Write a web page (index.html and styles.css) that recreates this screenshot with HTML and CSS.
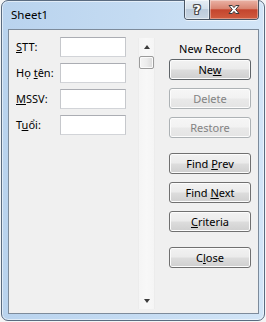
FILE: index.html
```html
<!DOCTYPE html>
<html>
<head>
<meta charset="utf-8">
<link rel="stylesheet" href="styles.css">
</head>
<body>
<div class="window">
  <div class="titlebar">
    <span class="title">Sheet1</span>
    <div class="caption-btns">
      <div class="cap help"><span class="q">?</span></div>
      <div class="cap close">
        <svg width="14" height="11" viewBox="0 0 14 11">
          <path d="M2 1.5 L5.2 1.5 L7 3.6 L8.8 1.5 L12 1.5 L8.7 5.5 L12 9.5 L8.8 9.5 L7 7.4 L5.2 9.5 L2 9.5 L5.3 5.5 Z" fill="#fff" stroke="#3b3b3b" stroke-width="1" stroke-linejoin="round"/>
        </svg>
      </div>
    </div>
  </div>
  <div class="client">
    <div class="form">
      <div class="row"><label class="lbl"><u>S</u>TT:</label><span class="box"></span></div>
      <div class="row"><label class="lbl">Họ <u>t</u>ên:</label><span class="box"></span></div>
      <div class="row"><label class="lbl"><u>M</u>SSV:</label><span class="box"></span></div>
      <div class="row"><label class="lbl">T<u>u</u>ổi:</label><span class="box"></span></div>
    </div>
    <div class="scrollbar">
      <div class="arrow-btn"><span class="tri up"></span></div>
      <div class="thumb"></div>
      <div class="track"></div>
      <div class="arrow-btn"><span class="tri down"></span></div>
    </div>
    <div class="actions">
      <div class="record">New Record</div>
      <div class="group">
        <button class="btn default">Ne<u>w</u></button>
        <button class="btn" disabled>Delete</button>
        <button class="btn" disabled>Restore</button>
      </div>
      <div class="group">
        <button class="btn">Find <u>P</u>rev</button>
        <button class="btn">Find <u>N</u>ext</button>
        <button class="btn"><u>C</u>riteria</button>
      </div>
      <div class="group">
        <button class="btn">C<u>l</u>ose</button>
      </div>
    </div>
  </div>
</div>
</body>
</html>
```

FILE: styles.css
```css
* { box-sizing: border-box; }
html, body {
  margin: 0;
  padding: 0;
  width: 266px;
  height: 322px;
  overflow: hidden;
  background: #f3f4f5;
  font-family: "Noto Sans", "Segoe UI", sans-serif;
  font-size: 11px;
  color: #000;
}
.window {
  margin-left: 1px;
  width: 264px;
  height: 321px;
  border: 1px solid #5a6b80;
  border-radius: 7px;
  background: linear-gradient(to right, #b9d3ee 0%, #c4dbf2 50%, #d2e5f7 100%);
  box-shadow: inset 0 0 0 1px rgba(255,255,255,0.55);
  padding: 0 5px 6px 6px;
  display: flex;
  flex-direction: column;
}
.titlebar {
  height: 28px;
  display: flex;
  align-items: flex-start;
  justify-content: space-between;
}
.title {
  padding-left: 3px;
  padding-top: 6px;
  font-size: 11.5px;
  line-height: 16px;
  color: #000;
}
.caption-btns {
  display: flex;
  margin-top: -1px;
  height: 20px;
  border: 1px solid #4a5563;
  border-top: none;
  border-radius: 0 0 4px 4px;
  overflow: hidden;
  box-shadow: 0 1px 0 rgba(255,255,255,0.6);
}
.cap {
  height: 19px;
  display: flex;
  align-items: center;
  justify-content: center;
}
.help {
  width: 25px;
  border-right: 1px solid #4a5563;
  background: linear-gradient(to bottom, #e6edf4 0%, #d4dfea 45%, #bccbdb 50%, #c9d6e3 100%);
  box-shadow: inset 0 0 0 1px rgba(255,255,255,0.5);
}
.q {
  font-family: "DejaVu Sans", sans-serif;
  font-weight: bold;
  font-size: 13px;
  line-height: 13px;
  color: #fff;
  text-shadow: -1px 0 #4b4b4b, 1px 0 #4b4b4b, 0 -1px #4b4b4b, 0 1px #4b4b4b, 1px 1px #4b4b4b, -1px -1px #4b4b4b, 1px -1px #4b4b4b, -1px 1px #4b4b4b;
}
.close {
  width: 48px;
  background: linear-gradient(to bottom, #eab3a6 0%, #d98572 45%, #c4452e 52%, #d05c3f 100%);
  box-shadow: inset 0 0 0 1px rgba(255,255,255,0.35);
}
.client {
  flex: 1;
  border: 1px solid #7d8b9b;
  background: #f0f0f0;
  display: flex;
  padding: 0 0 0 7px;
}
.form {
  width: 122px;
  padding-top: 7px;
  display: flex;
  flex-direction: column;
  gap: 6px;
}
.row {
  display: flex;
  align-items: center;
  height: 20px;
}
.lbl {
  width: 44px;
  line-height: 16px;
}
.lbl u, .btn u { text-underline-offset: 1px; }
.box {
  width: 66px;
  height: 20px;
  background: #fff;
  border: 1px solid #abadb3;
  border-color: #abadb3 #c6c8cc #d2d4d8 #c6c8cc;
}
.scrollbar {
  width: 17px;
  margin-top: 8px;
  height: 271px;
  display: flex;
  flex-direction: column;
  background: linear-gradient(to right, #e3e3e3 0, #f5f5f5 1px, #f8f8f8 50%, #f5f5f5 calc(100% - 1px), #e3e3e3 100%);
}
.arrow-btn {
  height: 17px;
  display: flex;
  align-items: center;
  justify-content: center;
}
.tri {
  width: 0;
  height: 0;
  border-left: 3.5px solid transparent;
  border-right: 3.5px solid transparent;
}
.tri.up { border-bottom: 4px solid #3c3c3c; margin-left: 1px; }
.tri.down { border-top: 4px solid #3c3c3c; margin-left: 1px; }
.thumb {
  height: 13px;
  margin: 1px 1px 0 1px;
  border: 1px solid #9b9b9b;
  border-radius: 2px;
  background: linear-gradient(to right, #f4f4f4 0%, #ececec 50%, #dadada 100%);
  box-shadow: inset 0 0 0 1px #fafafa;
}
.track { flex: 1; }
.actions {
  margin-left: 14px;
  width: 82px;
  padding-top: 11px;
  display: flex;
  flex-direction: column;
  gap: 15px;
}
.record {
  text-align: center;
  line-height: 16px;
  margin-bottom: -13px;
  height: 16px;
}
.group {
  display: flex;
  flex-direction: column;
  gap: 8px;
}
.btn {
  font-family: "Noto Sans", "Segoe UI", sans-serif;
  font-size: 11px;
  color: #000;
  width: 82px;
  height: 21px;
  padding: 0;
  line-height: 16px;
  border: 1px solid #707070;
  border-radius: 3px;
  background: linear-gradient(to bottom, #f2f2f2 0%, #ebebeb 48%, #dddddd 52%, #cfcfcf 100%);
  box-shadow: inset 0 0 0 1px #fcfcfc;
}
.btn.default {
  border-color: #5f6468;
}
.btn:disabled {
  color: #838383;
  border-color: #adb2b5;
  background: linear-gradient(to bottom, #f6f6f6 0%, #f2f2f2 48%, #e9e9e9 52%, #e4e4e4 100%);
}
```
